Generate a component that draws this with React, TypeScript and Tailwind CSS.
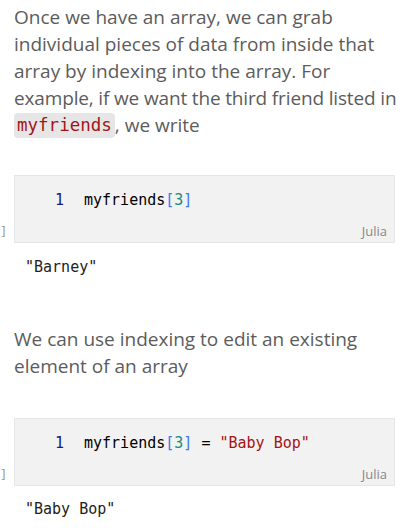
import React from "react";

const mono = "font-['Consolas','DejaVu_Sans_Mono',monospace]";
const prose =
  "pl-[14px] text-[19px] leading-[27px] text-[#5c5c5c] font-['Open_Sans',sans-serif] whitespace-nowrap";

const CodeCell: React.FC<{ children: React.ReactNode }> = ({ children }) => (
  <div className="flex items-end">
    <span className="w-[14px] pb-[5px] text-[12px] text-[#999] font-['DejaVu_Sans_Mono',monospace] leading-none">
      ]
    </span>
    <div className="flex-1 mr-[7px] h-[68px] bg-[#f2f2f2] border border-[#e6e6e6] flex flex-col">
      <div className={`flex items-center pt-[14px] text-[15px] leading-[20px] ${mono}`}>
        <span className="w-[49px] text-right text-[#14207a]">1</span>
        <span className="ml-[20px] text-black">{children}</span>
      </div>
      <div className="mt-auto pb-[4px] pr-[7px] text-right text-[13px] text-[#888] font-['Open_Sans',sans-serif] leading-none">
        Julia
      </div>
    </div>
  </div>
);

const Bracketed = () => (
  <>
    myfriends<span className="text-[#3a7bf0]">[</span>
    <span className="text-[#168a7a]">3</span>
    <span className="text-[#3a7bf0]">]</span>
  </>
);

const App: React.FC = () => {
  return (
    <div className="w-[402px] h-[528px] bg-white overflow-hidden pt-[4px]">
      <p className={prose}>
        Once we have an array, we can grab
        <br />
        individual pieces of data from inside that
        <br />
        array by indexing into the array. For
        <br />
        <span className="tracking-[-0.15px]">example, if we want the third friend listed in</span>
        <br />
        <code
          className={`inline-block align-top mt-[1px] h-[25px] leading-[25px] bg-[#e6e6e6] text-[#a31515] rounded-[4px] px-[3px] text-[17.5px] ${mono}`}
        >
          myfriends
        </code>
        , we write
      </p>

      <div className="mt-[36px]">
        <CodeCell>
          <Bracketed />
        </CodeCell>
      </div>
      <div className={`pl-[25px] mt-[14px] text-[15px] leading-[20px] text-[#222] ${mono}`}>"Barney"</div>

      <p className={`mt-[49px] ${prose}`}>
        We can use indexing to edit an existing
        <br />
        element of an array
      </p>

      <div className="mt-[38px]">
        <CodeCell>
          <Bracketed /> = <span className="text-[#a31515]">"Baby Bop"</span>
        </CodeCell>
      </div>
      <div className={`pl-[25px] mt-[13px] text-[15px] leading-[20px] text-[#222] ${mono}`}>"Baby Bop"</div>
    </div>
  );
};

export default App;
